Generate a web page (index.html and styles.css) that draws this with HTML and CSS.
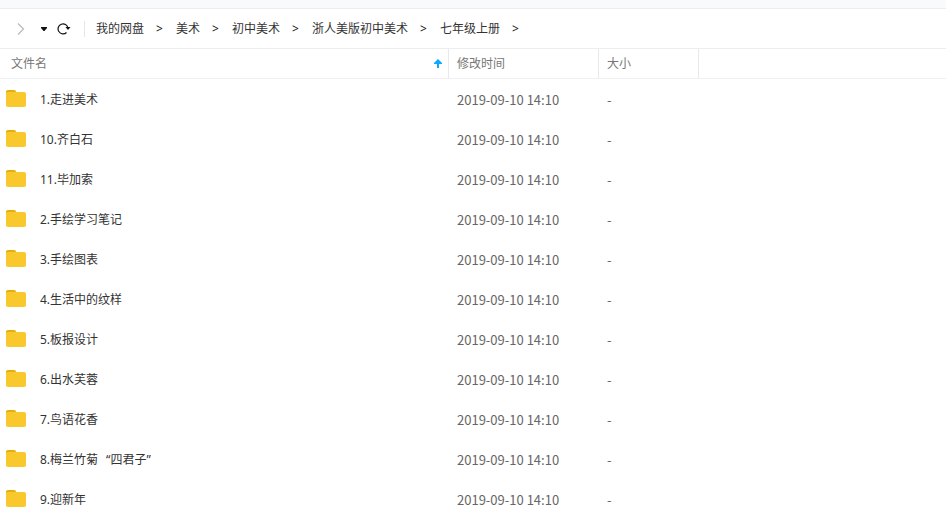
FILE: index.html
```html
<!DOCTYPE html>
<html lang="zh-CN">
<head>
    <meta charset="utf-8">
    <meta name="viewport" content="width=device-width, initial-scale=1.0"/>
    <title>我的网盘</title>
    <link rel="stylesheet" href="styles.css">
</head>
<body>
<svg class="defs" aria-hidden="true">
    <symbol id="folder" viewBox="0 0 20 17">
        <path fill="#e6b00a" d="M0 2a2 2 0 0 1 2-2h6a2 2 0 0 1 2 2v3H0z"/>
        <path fill="#f8c82c" d="M0 4q0-2 2-2h16q2 0 2 2v11q0 2-2 2H2q-2 0-2-2z"/>
    </symbol>
</svg>
<div class="topbar"></div>
<div class="toolbar">
    <button class="btn forward" type="button" aria-label="前进">
        <svg width="8" height="12" viewBox="0 0 8 12"><path d="M1 .5L6.5 6L1 11.5" fill="none" stroke="#bbb" stroke-width="1.300"/></svg>
    </button>
    <button class="btn history" type="button" aria-label="历史">
        <svg width="6" height="4" viewBox="0 0 6 4"><path d="M0 0h6v1L3.500 4h-1L0 1z" fill="#111"/></svg>
    </button>
    <button class="btn refresh" type="button" aria-label="刷新">
        <svg width="14" height="12" viewBox="0 0 14 12"><path d="M9.500 9.500A5 5 0 1 1 11 5" fill="none" stroke="#111" stroke-width="1.200"/><path d="M8.500 4h5L11 7z" fill="#111"/></svg>
    </button>
    <nav class="path">
        <a href="#">我的网盘</a><span class="sep">&gt;</span>
        <a href="#">美术</a><span class="sep">&gt;</span>
        <a href="#">初中美术</a><span class="sep">&gt;</span>
        <a href="#">浙人美版初中美术</a><span class="sep">&gt;</span>
        <a href="#">七年级上册</a><span class="sep">&gt;</span>
    </nav>
</div>
<div class="list">
    <table class="files">
        <colgroup>
            <col class="col-name"><col class="col-time"><col class="col-size"><col>
        </colgroup>
        <thead>
        <tr>
            <th>
                <div class="sort">文件名
                    <svg width="8" height="9" viewBox="0 0 8 9"><path d="M4 0l4 4v1H5v4H3V5H0V4z" fill="#09aaff"/></svg>
                </div>
            </th>
            <th>修改时间</th>
            <th>大小</th>
            <th></th>
        </tr>
        </thead>
        <tbody>
        <tr><td><a class="name" href="#"><svg class="icon"><use href="#folder"/></svg>1.走进美术</a></td><td>2019-09-10 14:10</td><td>-</td><td></td></tr>
        <tr><td><a class="name" href="#"><svg class="icon"><use href="#folder"/></svg>10.齐白石</a></td><td>2019-09-10 14:10</td><td>-</td><td></td></tr>
        <tr><td><a class="name" href="#"><svg class="icon"><use href="#folder"/></svg>11.毕加索</a></td><td>2019-09-10 14:10</td><td>-</td><td></td></tr>
        <tr><td><a class="name" href="#"><svg class="icon"><use href="#folder"/></svg>2.手绘学习笔记</a></td><td>2019-09-10 14:10</td><td>-</td><td></td></tr>
        <tr><td><a class="name" href="#"><svg class="icon"><use href="#folder"/></svg>3.手绘图表</a></td><td>2019-09-10 14:10</td><td>-</td><td></td></tr>
        <tr><td><a class="name" href="#"><svg class="icon"><use href="#folder"/></svg>4.生活中的纹样</a></td><td>2019-09-10 14:10</td><td>-</td><td></td></tr>
        <tr><td><a class="name" href="#"><svg class="icon"><use href="#folder"/></svg>5.板报设计</a></td><td>2019-09-10 14:10</td><td>-</td><td></td></tr>
        <tr><td><a class="name" href="#"><svg class="icon"><use href="#folder"/></svg>6.出水芙蓉</a></td><td>2019-09-10 14:10</td><td>-</td><td></td></tr>
        <tr><td><a class="name" href="#"><svg class="icon"><use href="#folder"/></svg>7.鸟语花香</a></td><td>2019-09-10 14:10</td><td>-</td><td></td></tr>
        <tr><td><a class="name" href="#"><svg class="icon"><use href="#folder"/></svg><span>8.梅兰竹菊<span class="quote">“四君子”</span></span></a></td><td>2019-09-10 14:10</td><td>-</td><td></td></tr>
        <tr><td><a class="name" href="#"><svg class="icon"><use href="#folder"/></svg>9.迎新年</a></td><td>2019-09-10 14:10</td><td>-</td><td></td></tr>
        </tbody>
    </table>
</div>
</body>
</html>
```
FILE: styles.css
```css
* {
    box-sizing: border-box;
}

body {
    margin: 0;
    height: 100vh;
    display: flex;
    flex-direction: column;
    overflow: hidden;
    background: #fff;
    color: #333;
    font: 12px/20px "Noto Sans", "Noto Sans CJK SC", sans-serif;
}

a {
    color: inherit;
    text-decoration: none;
}

.defs {
    position: absolute;
    width: 0;
    height: 0;
}

.topbar {
    flex: none;
    height: 9px;
    background: #f9fafb;
    border-bottom: 1px solid #ededed;
}

.toolbar {
    flex: none;
    display: flex;
    align-items: center;
    height: 40px;
    padding-left: 17px;
    border-bottom: 1px solid #ededed;
}

.btn {
    display: flex;
    padding: 0;
    border: 0;
    background: none;
    cursor: pointer;
}

.history {
    margin: 0 10px 0 16px;
}

.path {
    display: flex;
    margin-left: 13px;
    padding-left: 12px;
    background: linear-gradient(#e5e5e5, #e5e5e5) 0 center / 1px 16px no-repeat;
}

.sep {
    width: 8px;
    margin: 0 12px;
    color: #111;
}

.list {
    flex: 1;
    overflow: hidden;
}

.files {
    width: 100%;
    table-layout: fixed;
    border-collapse: separate;
    border-spacing: 0;
}

.col-name {
    width: 449px;
}

.col-time {
    width: 150px;
}

.col-size {
    width: 100px;
}

.files th {
    height: 30px;
    padding: 0 8px;
    border-right: 1px solid #e9e9ed;
    border-bottom: 1px solid #f0f0f3;
    color: #777;
    font-weight: normal;
    text-align: left;
}

.files th:first-child {
    padding: 0 6px 0 11px;
}

.files th:last-child {
    border-right: 0;
}

.sort {
    display: flex;
    align-items: center;
    justify-content: space-between;
}

.files td {
    height: 40px;
    padding: 2px 8px 0;
    color: #666;
    font-family: "Noto Sans CJK SC", sans-serif;
    font-size: 13px;
}

.files td:first-child {
    padding: 2px 6px 0;
}

.name {
    display: flex;
    align-items: flex-start;
    gap: 14px;
    color: #333;
    font-family: "Noto Sans", "Noto Sans CJK SC", sans-serif;
    font-size: 12px;
}

.icon {
    width: 20px;
    height: 17px;
}

.quote {
    margin-left: 8px;
}
```
